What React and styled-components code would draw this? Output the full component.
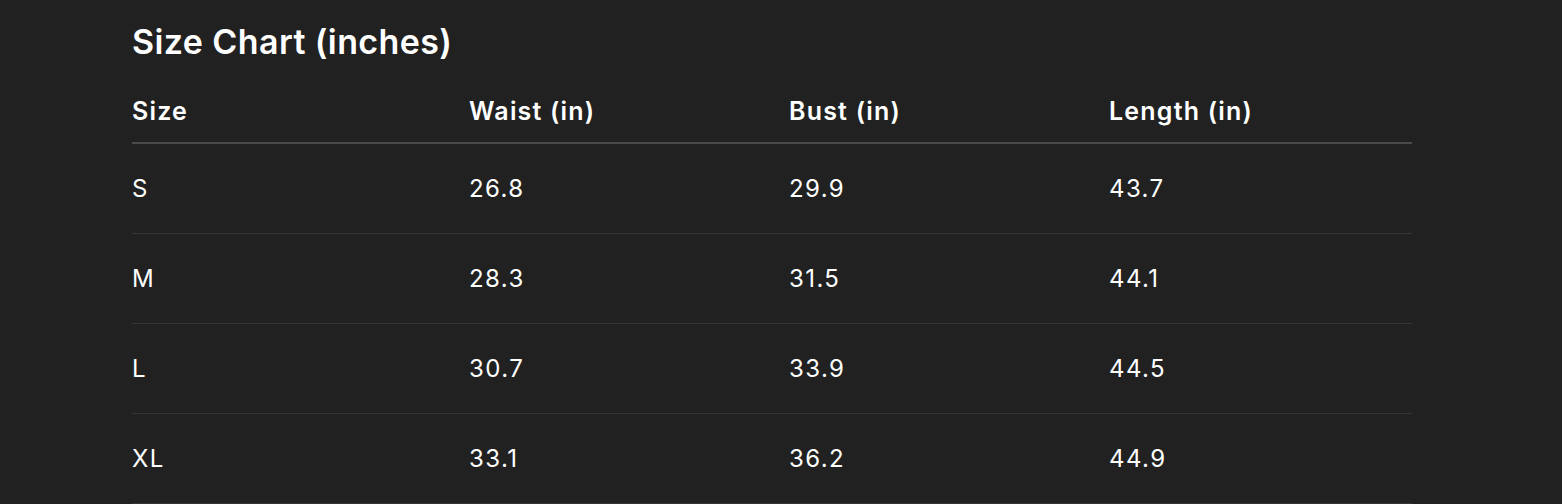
import React from 'react';
import styled, { createGlobalStyle } from 'styled-components';

const GlobalStyle = createGlobalStyle`
  body {
    margin: 0;
    background: #212121;
    font-family: Inter, "Noto Sans", sans-serif;
    color: #ffffff;
  }
`;

const Wrapper = styled.div`
  padding: 22px 0 0 132px;
  width: 1280px;
`;

const Title = styled.h2`
  margin: 0 0 18px;
  font-size: 34px;
  line-height: 40px;
  font-weight: 600;
  letter-spacing: 0.4px;
`;

const Table = styled.table`
  width: 1280px;
  border-collapse: collapse;
  table-layout: fixed;
`;

const HeadCell = styled.th`
  text-align: left;
  font-size: 25px;
  line-height: 30px;
  font-weight: 600;
  letter-spacing: 1.2px;
  padding: 16px 0;
  border-bottom: 2px solid #4a4a4a;
`;

const Cell = styled.td`
  font-size: 24px;
  line-height: 30px;
  font-weight: 400;
  letter-spacing: 1.4px;
  padding: 30px 0 29px;
  border-bottom: 1px solid #353535;
`;

const columns = ['Size', 'Waist (in)', 'Bust (in)', 'Length (in)'];
const widths = [337, 320, 320, 303];

const rows = [
  ['S', '26.8', '29.9', '43.7'],
  ['M', '28.3', '31.5', '44.1'],
  ['L', '30.7', '33.9', '44.5'],
  ['XL', '33.1', '36.2', '44.9'],
];

export default function App() {
  return (
    <Wrapper>
      <GlobalStyle />
      <Title>Size Chart (inches)</Title>
      <Table>
        <colgroup>
          {widths.map((w, i) => <col key={i} style={{ width: w }} />)}
        </colgroup>
        <thead>
          <tr>
            {columns.map((c) => <HeadCell key={c}>{c}</HeadCell>)}
          </tr>
        </thead>
        <tbody>
          {rows.map((r) => (
            <tr key={r[0]}>
              {r.map((v, i) => <Cell key={i}>{v}</Cell>)}
            </tr>
          ))}
        </tbody>
      </Table>
    </Wrapper>
  );
}
